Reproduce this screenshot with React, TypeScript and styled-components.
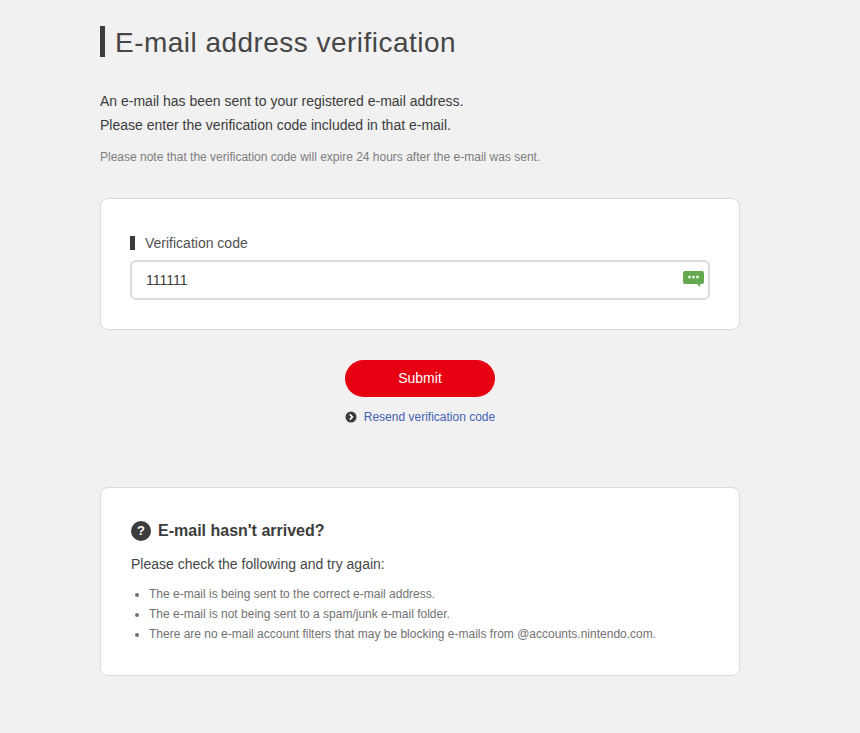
import React from 'react';
import styled, { createGlobalStyle } from 'styled-components';

const GlobalStyle = createGlobalStyle`
  html, body {
    margin: 0;
    padding: 0;
    background: #f1f1f1;
    color: #3c3c3c;
    font-family: "Liberation Sans", Arial, sans-serif;
    overflow: hidden;
  }
`;

const Page = styled.main`
  width: 640px;
  height: 733px;
  margin-left: 100px;
  padding-top: 26px;
  box-sizing: border-box;
`;

const Title = styled.h1`
  margin: 0 0 32px;
  height: 31px;
  padding-left: 10px;
  border-left: 5px solid #3c3c3c;
  font-size: 28px;
  font-weight: 400;
  line-height: 33px;
  letter-spacing: 0.47px;
  color: #464646;
`;

const Lead = styled.p`
  margin: 0;
  font-size: 14px;
  line-height: 24px;
  color: #3c3c3c;
`;

const Note = styled.p`
  margin: 12px 0 33px;
  font-size: 12px;
  line-height: 16px;
  color: #7d7d7d;
`;

const Card = styled.section`
  box-sizing: border-box;
  background: #fff;
  border: 1px solid #dcdcdc;
  border-radius: 8px;
`;

const FormCard = styled(Card)`
  height: 132px;
  padding: 37px 29px 0;
`;

const FieldLabel = styled.label`
  display: block;
  height: 14px;
  margin-bottom: 10px;
  padding-left: 10px;
  border-left: 5px solid #3c3c3c;
  font-size: 14px;
  line-height: 14px;
  color: #505050;
`;

const InputWrap = styled.div`
  position: relative;
`;

const Input = styled.input`
  display: block;
  width: 100%;
  height: 40px;
  box-sizing: border-box;
  padding: 0 40px 0 14px;
  background: #fff;
  border: 2px solid #dcdcdc;
  border-radius: 6px;
  outline: none;
  font-family: inherit;
  font-size: 14px;
  color: #3c3c3c;
`;

const FieldBadge = styled.svg`
  position: absolute;
  top: 11px;
  right: 6px;
  width: 21px;
  height: 17px;
`;

const Actions = styled.div`
  display: flex;
  flex-direction: column;
  align-items: center;
  margin: 30px 0 62px;
`;

const SubmitButton = styled.button`
  width: 150px;
  height: 37px;
  padding: 0 0 1px;
  border: 0;
  border-radius: 19px;
  background: #e60012;
  color: #fff;
  font-family: inherit;
  font-size: 14px;
`;

const ResendLink = styled.a`
  display: flex;
  align-items: center;
  gap: 7px;
  margin-top: 12px;
  height: 16px;
  font-size: 12px;
  line-height: 16px;
  color: #4661b4;
  text-decoration: none;
`;

const HelpCard = styled(Card)`
  height: 189px;
  padding: 32px 30px 0;
`;

const HelpHeading = styled.h2`
  display: flex;
  align-items: center;
  gap: 7px;
  margin: 0 0 13px;
  font-size: 16px;
  font-weight: 700;
  line-height: 22px;
  color: #3c3c3c;
`;

const HelpIcon = styled.span`
  display: flex;
  align-items: center;
  justify-content: center;
  width: 20px;
  height: 20px;
  border-radius: 50%;
  background: #3c3c3c;
  color: #fff;
  font-size: 13px;
  font-weight: 700;
`;

const HelpLead = styled.p`
  margin: 0 0 11px;
  font-size: 14px;
  line-height: 18px;
  color: #464646;
`;

const HelpList = styled.ul`
  margin: 0;
  padding: 0 0 0 18px;
  font-size: 12px;
  line-height: 20px;
  color: #727272;
`;

const tips = [
  'The e-mail is being sent to the correct e-mail address.',
  'The e-mail is not being sent to a spam/junk e-mail folder.',
  'There are no e-mail account filters that may be blocking e-mails from @accounts.nintendo.com.',
];

export default function App() {
  return (
    <>
      <GlobalStyle />
      <Page>
        <Title>E-mail address verification</Title>
        <Lead>An e-mail has been sent to your registered e-mail address.</Lead>
        <Lead>Please enter the verification code included in that e-mail.</Lead>
        <Note>Please note that the verification code will expire 24 hours after the e-mail was sent.</Note>

        <FormCard>
          <FieldLabel>Verification code</FieldLabel>
          <InputWrap>
            <Input readOnly value="111111" />
            <FieldBadge viewBox="0 0 21 17" aria-hidden="true">
              <path d="M2 0h17a2 2 0 0 1 2 2v9a2 2 0 0 1-2 2h-2v3l-3-3H2a2 2 0 0 1-2-2V2a2 2 0 0 1 2-2z" fill="#66a850" />
              <circle cx="6.5" cy="6" r="1.5" fill="#e6f2e0" />
              <circle cx="10.5" cy="6" r="1.5" fill="#e6f2e0" />
              <circle cx="14.5" cy="6" r="1.5" fill="#e6f2e0" />
            </FieldBadge>
          </InputWrap>
        </FormCard>

        <Actions>
          <SubmitButton type="button">Submit</SubmitButton>
          <ResendLink href="#">
            <svg width="12" height="12" viewBox="0 0 12 12" aria-hidden="true">
              <circle cx="6" cy="6" r="5.5" fill="#3c3c3c" />
              <path d="M4.8 3.4 7.4 6 4.8 8.6" fill="none" stroke="#fff" strokeWidth="1.6" />
            </svg>
            Resend verification code
          </ResendLink>
        </Actions>

        <HelpCard>
          <HelpHeading>
            <HelpIcon>?</HelpIcon>
            E-mail hasn't arrived?
          </HelpHeading>
          <HelpLead>Please check the following and try again:</HelpLead>
          <HelpList>
            {tips.map((tip) => (
              <li key={tip}>{tip}</li>
            ))}
          </HelpList>
        </HelpCard>
      </Page>
    </>
  );
}
